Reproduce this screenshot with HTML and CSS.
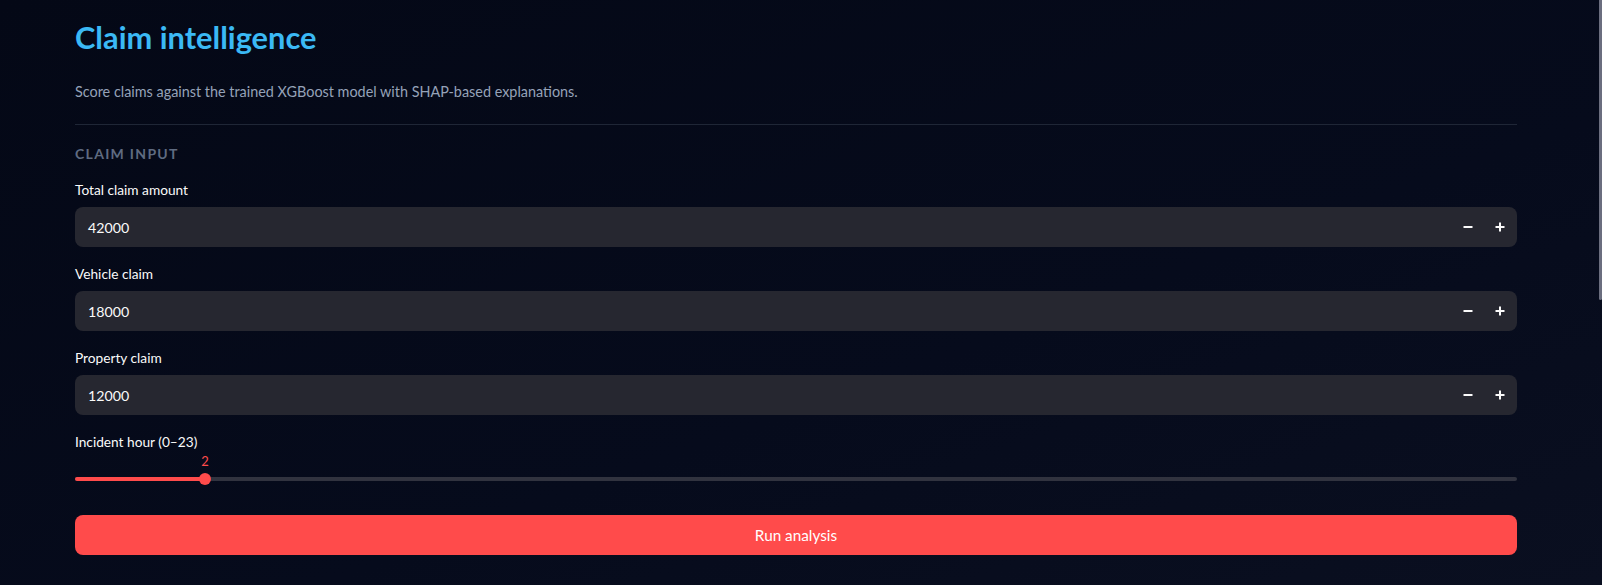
FILE: index.html
```html
<!DOCTYPE html>
<html>
<head>
<meta charset="utf-8">
<link rel="stylesheet" href="styles.css">
</head>
<body>
<div class="app">
  <main class="main">
    <h1 class="title">Claim intelligence</h1>
    <p class="subtitle">Score claims against the trained XGBoost model with SHAP-based explanations.</p>
    <hr class="divider">
    <div class="section">CLAIM INPUT</div>

    <div class="field">
      <label class="label">Total claim amount</label>
      <div class="numinput">
        <span class="value">42000</span>
        <span class="steps">
          <span class="step"><svg width="10" height="10" viewBox="0 0 10 10"><rect x="0.5" y="4" width="9" height="2" fill="#fafafa"/></svg></span>
          <span class="step"><svg width="10" height="10" viewBox="0 0 10 10"><rect x="0.5" y="4" width="9" height="2" fill="#fafafa"/><rect x="4" y="0.5" width="2" height="9" fill="#fafafa"/></svg></span>
        </span>
      </div>
    </div>

    <div class="field">
      <label class="label">Vehicle claim</label>
      <div class="numinput">
        <span class="value">18000</span>
        <span class="steps">
          <span class="step"><svg width="10" height="10" viewBox="0 0 10 10"><rect x="0.5" y="4" width="9" height="2" fill="#fafafa"/></svg></span>
          <span class="step"><svg width="10" height="10" viewBox="0 0 10 10"><rect x="0.5" y="4" width="9" height="2" fill="#fafafa"/><rect x="4" y="0.5" width="2" height="9" fill="#fafafa"/></svg></span>
        </span>
      </div>
    </div>

    <div class="field">
      <label class="label">Property claim</label>
      <div class="numinput">
        <span class="value">12000</span>
        <span class="steps">
          <span class="step"><svg width="10" height="10" viewBox="0 0 10 10"><rect x="0.5" y="4" width="9" height="2" fill="#fafafa"/></svg></span>
          <span class="step"><svg width="10" height="10" viewBox="0 0 10 10"><rect x="0.5" y="4" width="9" height="2" fill="#fafafa"/><rect x="4" y="0.5" width="2" height="9" fill="#fafafa"/></svg></span>
        </span>
      </div>
    </div>

    <div class="field">
      <label class="label slider-label">Incident hour (0–23)</label>
      <div class="slider">
        <div class="track">
          <div class="fill" style="width: 130px"></div>
          <div class="thumb" style="left: 130px"><span class="thumb-val">2</span></div>
        </div>
      </div>
    </div>

    <button class="run">Run analysis</button>
  </main>
  <div class="scrollthumb"></div>
</div>
</body>
</html>
```

FILE: styles.css
```css
* { box-sizing: border-box; }
html, body { margin: 0; padding: 0; }
body {
  width: 1602px;
  height: 585px;
  overflow: hidden;
  background: linear-gradient(160deg, #040816 0%, #060b1c 60%, #0a0f20 100%);
  font-family: "Lato", "Noto Sans", sans-serif;
  color: #fafafa;
}
.app { position: relative; height: 585px; }
.main {
  width: 1442px;
  margin-left: 75px;
  padding-top: 18px;
  display: flex;
  flex-direction: column;
}
.title {
  margin: 0;
  font-size: 30.8px;
  font-weight: 700;
  color: #3bb9f4;
  line-height: 40px;
}
.subtitle {
  margin: 24px 0 0 0;
  font-size: 14.4px;
  line-height: 20px;
  color: #95a2b8;
}
.divider {
  margin: 22px 0 0 0;
  border: 0;
  height: 1px;
  background: #1f2636;
  width: 100%;
}
.section {
  margin-top: 20px;
  font-size: 14px;
  font-weight: 700;
  letter-spacing: 1.3px;
  color: #5f6b81;
  line-height: 18px;
}
.field { display: flex; flex-direction: column; margin-top: 18px; }
.label {
  font-size: 13.7px;
  line-height: 18px;
  color: #fafafa;
  margin-bottom: 8px;
}
.numinput {
  height: 40px;
  background: #262730;
  border-radius: 8px;
  display: flex;
  align-items: center;
  justify-content: space-between;
  padding: 0 1px 0 13px;
}
.value { font-size: 14.2px; color: #fafafa; }
.steps { display: flex; height: 100%; }
.step {
  width: 32px;
  display: flex;
  align-items: center;
  justify-content: center;
}
.step svg { display: block; }
.slider-label { margin-bottom: 0; }
.slider { height: 40px; position: relative; }
.track {
  position: absolute;
  left: 0; right: 0;
  top: 26px;
  height: 4px;
  border-radius: 2px;
  background: #31333f;
}
.fill {
  position: absolute;
  left: 0; top: 0; bottom: 0;
  background: #ff4b4b;
  border-radius: 2px;
}
.thumb {
  position: absolute;
  top: -4px;
  width: 12px;
  height: 12px;
  margin-left: -6px;
  border-radius: 50%;
  background: #ff4b4b;
}
.thumb-val {
  position: absolute;
  top: -18px;
  left: 50%;
  transform: translateX(-50%);
  font-size: 13px;
  line-height: 13px;
  color: #ff4b4b;
}
.run {
  margin-top: 24px;
  height: 40px;
  width: 100%;
  border: 0;
  border-radius: 8px;
  background: #ff4b4b;
  color: #ffffff;
  font-family: inherit;
  font-size: 15.3px;
}
.scrollthumb {
  position: absolute;
  right: 0;
  top: 0;
  width: 3px;
  height: 300px;
  background: #6b6e7f;
  border-radius: 0 0 2px 2px;
}
```
